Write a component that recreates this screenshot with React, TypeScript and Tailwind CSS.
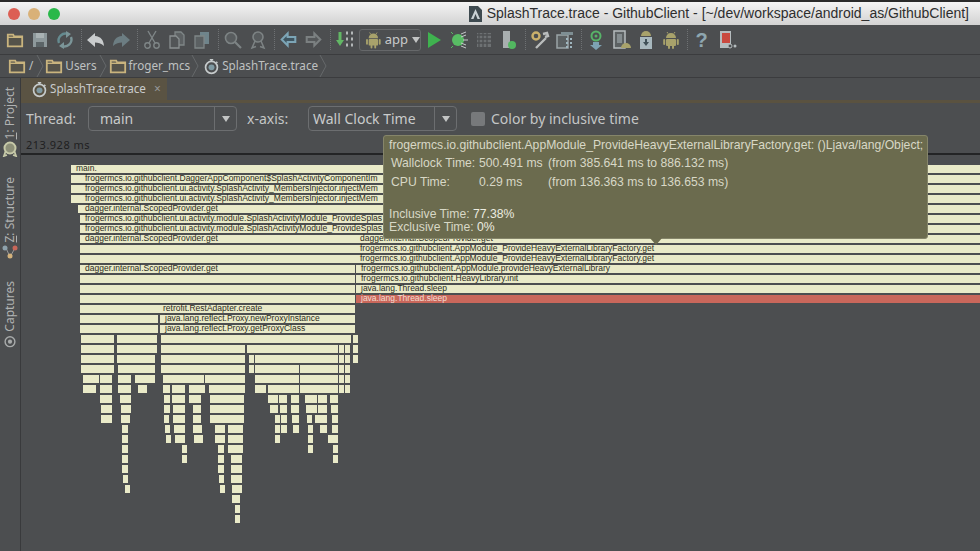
import type { ReactNode } from "react"

type Bar = { from: number; to: number; label?: string; pad?: number; red?: boolean }

const bar = (from: number, to: number, label?: string, pad = 5, red = false): Bar => ({ from, to, label, pad, red })

// lower rows were measured on a 3x crop starting at x=60
const low = (spans: number[][]): Bar[] => spans.map(([a, b]) => bar(60 + a / 3, 60 + b / 3))

const pkg = "frogermcs.io.githubclient"
const inject = `${pkg}.ui.activity.SplashActivity_MembersInjector.injectMem`
const provide = `${pkg}.ui.activity.module.SplashActivityModule_ProvideSplas`
const heavyGet = `${pkg}.AppModule_ProvideHeavyExternalLibraryFactory.get`
const scoped = "dagger.internal.ScopedProvider.get"

const rows: Bar[][] = [
  [bar(71, 980, "main.")],
  [bar(71, 77.5), bar(78, 980, `${pkg}.DaggerAppComponent$SplashActivityComponentIm`, 7)],
  [bar(71, 77.5), bar(78, 980, inject, 7)],
  [bar(71, 77.5), bar(78, 980, inject, 7)],
  [bar(78, 980, scoped, 7)],
  [bar(80, 980, provide)],
  [bar(80, 980, provide)],
  [bar(80, 355, scoped), bar(355, 980, scoped)],
  [bar(80, 355), bar(355, 980, heavyGet)],
  [bar(80, 355), bar(355, 980, heavyGet)],
  [bar(80, 354.5, scoped), bar(356, 980, `${pkg}.AppModule.provideHeavyExternalLibrary`)],
  [bar(80, 354.5), bar(356, 980, `${pkg}.HeavyLibrary.init`)],
  [bar(80, 354.5), bar(356, 980, "java.lang.Thread.sleep")],
  [bar(80, 354.5), bar(356, 980, "java.lang.Thread.sleep", 5, true)],
  [bar(80, 157.5), bar(158, 354.5, "retrofit.RestAdapter.create")],
  [bar(80, 157.5), bar(160, 354.5, "java.lang.reflect.Proxy.newProxyInstance")],
  [bar(80, 157.5), bar(160, 354.5, "java.lang.reflect.Proxy.getProxyClass")],
  low([[62, 162], [172, 292], [302, 872], [878, 884]]),
  low([[62, 162], [172, 290], [302, 556], [562, 834], [838, 852], [856, 870], [880, 884]]),
  low([[62, 162], [172, 286], [302, 554], [567, 573], [585, 834], [838, 852], [856, 870], [880, 884]]),
  low([[64, 162], [174, 286], [302, 554], [567, 573], [585, 716], [719, 834], [838, 852], [856, 870]]),
  low([[70, 117], [119, 156], [174, 213], [225, 284], [309, 432], [436, 554], [585, 717], [720, 834], [838, 852], [856, 870]]),
  low([[70, 108], [119, 156], [174, 212], [233, 261], [309, 330], [337, 374], [386, 394], [398, 434], [447, 554], [585, 618], [624, 656], [658, 716], [721, 834], [838, 852], [856, 870]]),
  low([[119, 156], [181, 212], [312, 330], [337, 374], [386, 394], [398, 424], [449, 552], [625, 654], [658, 682], [692, 716], [735, 770], [773, 802], [810, 834]]),
  low([[123, 156], [184, 212], [312, 330], [338, 356], [358, 374], [398, 424], [449, 552], [630, 654], [660, 682], [694, 716], [738, 770], [773, 802], [814, 834]]),
  low([[123, 156], [184, 210], [312, 324], [338, 356], [358, 374], [398, 424], [450, 456], [460, 552], [645, 654], [664, 682], [697, 716], [742, 756], [765, 769], [778, 802], [815, 834]]),
  low([[185, 204], [315, 324], [342, 356], [358, 374], [400, 408], [410, 424], [465, 496], [503, 548], [645, 650], [664, 682], [699, 716], [743, 752], [780, 802], [815, 834]]),
  low([[185, 204], [318, 324], [345, 354], [360, 374], [402, 408], [414, 422], [465, 496], [503, 548], [645, 650], [743, 750], [804, 808], [819, 824]]),
  low([[185, 204], [366, 372], [473, 492], [503, 548], [743, 746], [819, 824]]),
  low([[185, 204], [366, 372], [473, 492], [513, 546], [820, 824]]),
  low([[185, 204], [473, 492], [513, 546]]),
  low([[190, 204], [477, 492], [513, 546]]),
  low([[196, 202], [481, 492], [516, 519], [523, 546]]),
  low([[516, 519], [524, 531]]),
  low([[525, 531]]),
  low([[525, 531]]),
]

function Glyph({ children, size = 20 }: { children: ReactNode; size?: number }) {
  return (
    <svg width={size} height={size} viewBox="0 0 20 20" fill="none">
      {children}
    </svg>
  )
}

const Folder = () => (
  <Glyph size={18}>
    <path d="M2 4h6l1 2h9v11H2z" fill="#55534a" stroke="#c9b47e" strokeWidth="2" />
    <path d="M2 7h16" stroke="#c9b47e" strokeWidth="1.5" />
  </Glyph>
)

const Stopwatch = () => (
  <Glyph size={17}>
    <circle cx="10" cy="11" r="7" stroke="#c6cbcc" strokeWidth="2" />
    <circle cx="10" cy="11" r="3.5" fill="#7f9aa3" />
    <path d="M8 2h4M10 2v2M15.5 4.5l1.5 1.5" stroke="#c6cbcc" strokeWidth="1.6" />
  </Glyph>
)

const Android = ({ color = "#a8a26b" }: { color?: string }) => (
  <Glyph>
    <path d="M5 8a5 5 0 0 1 10 0z" fill={color} />
    <path d="M7 3.5 6 2M13 3.5 14 2" stroke={color} />
    <rect x="5" y="9" width="10" height="7" rx="1" fill={color} />
    <rect x="2.2" y="9" width="2" height="6" rx="1" fill={color} />
    <rect x="15.8" y="9" width="2" height="6" rx="1" fill={color} />
    <rect x="7" y="15" width="2" height="4" rx="1" fill={color} />
    <rect x="11" y="15" width="2" height="4" rx="1" fill={color} />
  </Glyph>
)

const tools: Record<string, ReactNode> = {
  folder: <Folder />,
  save: (
    <Glyph>
      <path d="M3 3h14v14H3z" fill="#8d989b" />
      <path d="M6 3h8v5H6z" fill="#a9b2b4" />
      <path d="M6 12h8v5H6z" fill="#5b6467" />
    </Glyph>
  ),
  sync: (
    <Glyph>
      <path d="M4 13a7 7 0 0 1 9-9" stroke="#658b90" strokeWidth="2.4" />
      <path d="M16 7a7 7 0 0 1-9 9" stroke="#7b9598" strokeWidth="2.4" />
      <path d="M11 1l5 3-5 4zM9 19l-5-3 5-4z" fill="#7b9598" />
    </Glyph>
  ),
  undo: (
    <Glyph>
      <path d="M9 3 1 10l8 7v-4.500c3 0 6 .5 9 3.500-.5-6-3-9.500-9-10z" fill="#c9cccd" />
    </Glyph>
  ),
  redo: (
    <Glyph>
      <path d="m11 3 8 7-8 7v-4.500c-3 0-6 .5-9 3.500 .5-6 3-9.500 9-10z" fill="#6c7d82" />
    </Glyph>
  ),
  cut: (
    <Glyph>
      <circle cx="5.500" cy="15.500" r="2.700" stroke="#7f8687" strokeWidth="1.400" />
      <circle cx="14.500" cy="15.500" r="2.700" stroke="#7f8687" strokeWidth="1.400" />
      <path d="M7 13 14 1M13 13 6 1" stroke="#7f8687" strokeWidth="1.400" />
    </Glyph>
  ),
  copy: (
    <Glyph>
      <path d="M8 2h6l3 3v10H8z" fill="#5d6163" stroke="#7f8687" strokeWidth="1.300" />
      <path d="M3 6h6l3 3v9H3z" fill="#525557" stroke="#8a9091" strokeWidth="1.300" />
    </Glyph>
  ),
  paste: (
    <Glyph>
      <path d="M8 2h9v12H8z" fill="#6f848b" />
      <path d="M3 6h9v12H3z" fill="#5b6062" stroke="#7f8687" strokeWidth="1.300" />
    </Glyph>
  ),
  find: (
    <Glyph>
      <circle cx="8" cy="8" r="5.500" stroke="#7d8384" strokeWidth="1.600" fill="#585c5e" />
      <path d="m12 12 6 6" stroke="#7d8384" strokeWidth="2.200" />
    </Glyph>
  ),
  replace: (
    <Glyph>
      <circle cx="10" cy="7" r="5" stroke="#7d8384" strokeWidth="1.600" fill="#585c5e" />
      <path d="m7 11-3 7 4-1.500M13 11l3 7-4-1.500" stroke="#7d8384" strokeWidth="1.500" />
    </Glyph>
  ),
  back: (
    <Glyph size={17}>
      <path d="M9 3 2 10l7 7v-4h9V7H9z" fill="#3f5560" stroke="#7ca5b6" strokeWidth="2.400" />
    </Glyph>
  ),
  forward: (
    <Glyph size={17}>
      <path d="m11 3 7 7-7 7v-4H2V7h9z" fill="#55585a" stroke="#7b8081" strokeWidth="2.400" />
    </Glyph>
  ),
  binary: (
    <Glyph>
      <path d="M5 2v9" stroke="#62b765" strokeWidth="3" />
      <path d="M1 10h8l-4 6z" fill="#62b765" />
      <path d="M11 3h2M16 3h2M11 9h2M16 9h2M11 15h2M16 15h2" stroke="#b3b7b8" strokeWidth="3" />
    </Glyph>
  ),
  run: (
    <Glyph>
      <path d="M4 2v16l13-8z" fill="#3fb24f" />
    </Glyph>
  ),
  debug: (
    <Glyph>
      <circle cx="9" cy="10" r="6" fill="#58bd64" />
      <path d="M12 4 17 2M12 16l5 2M14 10h5M12 7l5-2M12 13l5 2" stroke="#c4c8c9" />
      <path d="M4 4 2 2M4 16l-2 2" stroke="#58bd64" />
    </Glyph>
  ),
  coverage: (
    <Glyph>
      <path d="M3 3h14v14H3z" fill="#6d7173" />
      <path d="M3 5h14M3 9h14M3 13h14M5 3v14M9 3v14M13 3v14" stroke="#4d4f51" strokeWidth="1.300" />
    </Glyph>
  ),
  attach: (
    <Glyph>
      <path d="M4 1h7v17H4z" fill="#a8aeaf" />
      <circle cx="13" cy="15" r="4" fill="#52b760" />
    </Glyph>
  ),
  settings: (
    <Glyph>
      <circle cx="6" cy="6" r="3.500" stroke="#cbb06b" strokeWidth="2.400" />
      <path d="M6 18 16 8M13 4l4-1 1 3-3 1" stroke="#b9bcbc" strokeWidth="2.400" />
    </Glyph>
  ),
  structure: (
    <Glyph>
      <path d="M2 5h11v13H2z" fill="#5b6062" stroke="#9aa4a7" strokeWidth="1.500" />
      <path d="M6 2h12v3H6z" fill="#7e8e93" />
      <path d="M11 8h2v2h-2zM15 8h2v2h-2zM11 12h2v2h-2zM15 12h2v2h-2zM11 16h2v2h-2zM15 16h2v2h-2z" fill="#9fb6bf" />
    </Glyph>
  ),
  gradle: (
    <Glyph>
      <circle cx="10" cy="6" r="4.500" stroke="#57b368" strokeWidth="2" />
      <circle cx="10" cy="6" r="1.500" fill="#57b368" />
      <path d="M7 12h6v3h3l-6 5-6-5h3z" fill="#7da2b2" />
    </Glyph>
  ),
  avd: (
    <Glyph>
      <path d="M3 1h11v17H3z" fill="#5c6163" stroke="#b5bcbe" strokeWidth="1.500" />
      <path d="M6 4h5v9H6z" fill="#858d90" />
      <path d="M10 18a5 5 0 0 1 10 0z" fill="#a8a26b" />
    </Glyph>
  ),
  sdk: (
    <Glyph>
      <path d="M5 6a5 5 0 0 1 10 0z" fill="#a8a26b" />
      <path d="M4 7h12v12H4z" fill="#a8b8be" />
      <path d="M9 9h2v3h2l-3 4-3-4h2z" fill="#3f5057" />
    </Glyph>
  ),
  android: <Android />,
  help: (
    <span className="font-['Liberation_Sans',sans-serif] text-[20px] leading-none font-bold text-[#8ea6b0]">?</span>
  ),
  monitor: (
    <Glyph>
      <path d="M3 1h11v17H3z" fill="#b5bcbe" />
      <path d="M5 3h8v10H5z" fill="#c9493f" />
      <circle cx="13" cy="16" r="2" fill="#4c4e50" stroke="#b5bcbe" />
      <circle cx="18" cy="16" r="1.500" fill="#b5bcbe" />
    </Glyph>
  ),
}

function Tool({ name }: { name: string }) {
  return <div className="flex h-full w-[25px] items-center justify-center">{tools[name]}</div>
}

function Sep() {
  return (
    <div className="flex h-full w-[6px] justify-end py-1 pr-[1px]">
      <div className="h-full border-r border-dotted border-[#6e7173]" />
    </div>
  )
}

function Crumb({ className }: { className: string }) {
  return (
    <svg width="9" height="22" viewBox="0 0 9 22" fill="none" className={`shrink-0 ${className}`}>
      <path d="M1 0l6 11-6 11" stroke="#66696b" />
    </svg>
  )
}

function SideLabel({ children, className }: { children: ReactNode; className: string }) {
  return (
    <div className={`rotate-180 whitespace-nowrap text-[12px] leading-[20px] text-[#b0b2b2] [writing-mode:vertical-rl] ${className}`}>
      {children}
    </div>
  )
}

function Select({ label, className, pad }: { label: string; className: string; pad: string }) {
  return (
    <div className={`flex h-[25px] items-center rounded-[4px] border border-[#6c6e70] ${className}`}>
      <div className={`flex-1 text-[14px] text-[#c9cbcb] ${pad}`}>{label}</div>
      <div className="flex h-full w-[22px] items-center justify-center border-l border-[#6c6e70]">
        <div className="h-0 w-0 border-x-[4px] border-t-[6px] border-x-transparent border-t-[#c2c4c4]" />
      </div>
    </div>
  )
}

function FlameRow({ bars }: { bars: Bar[] }) {
  return (
    <div className="relative h-[10px]">
      {bars.map((b, i) => (
        <div
          key={i}
          className={`absolute top-0 h-[7.5px] whitespace-nowrap font-['Liberation_Sans',sans-serif] text-[8.5px] leading-[7.5px] ${
            b.red ? "bg-[#c9675b] text-[#f3ddd2]" : "bg-[#e9eac8] text-[#2c2c22]"
          }`}
          style={{ left: b.from - 21, width: b.to - b.from, paddingLeft: b.pad }}
        >
          {b.label}
        </div>
      ))}
    </div>
  )
}

export default function App() {
  return (
    <div className="flex h-[551px] w-[980px] flex-col overflow-hidden bg-[#4c4e50] font-['Noto_Sans',sans-serif] text-[#c4c6c6]">
      {/* title bar */}
      <div className="flex h-[25px] shrink-0 items-center border-t-2 border-[#2a2a2a] bg-gradient-to-b from-[#f4f4f4] to-[#d2d2d2] pl-2 pr-[11px]">
        <div className="flex gap-2">
          <div className="h-3 w-3 rounded-full bg-[#dc5f54]" />
          <div className="h-3 w-3 rounded-full bg-[#d9b178]" />
          <div className="h-3 w-3 rounded-full bg-[#2ab84a]" />
        </div>
        <div className="ml-auto flex items-center gap-[5px]">
          <svg width="13" height="16" viewBox="0 0 13 16">
            <path d="M0 0h9l4 4v12H0z" fill="#3e4a50" />
            <path d="M6.500 3 11 13H8.500l-2-5-2 5H2z" fill="#c9d2d6" />
          </svg>
          <span className="font-['Liberation_Sans',sans-serif] text-[14px] text-[#2e2e2e]">
            SplashTrace.trace - GithubClient - [~/dev/workspace/android_as/GithubClient]
          </span>
        </div>
      </div>

      {/* main toolbar */}
      <div className="flex h-[30px] shrink-0 items-center border-b border-[#3b3c3e] pl-[2px]">
        <Tool name="folder" />
        <Tool name="save" />
        <Tool name="sync" />
        <Sep />
        <Tool name="undo" />
        <Tool name="redo" />
        <Sep />
        <Tool name="cut" />
        <Tool name="copy" />
        <Tool name="paste" />
        <Sep />
        <Tool name="find" />
        <Tool name="replace" />
        <Sep />
        <Tool name="back" />
        <Tool name="forward" />
        <Sep />
        <Tool name="binary" />
        <div className="ml-[2px] flex h-[22px] w-[62px] items-center gap-[2px] rounded-[3px] border border-[#66686a] pl-[4px]">
          <Android />
          <span className="text-[13px] text-[#c9cbcb]">app</span>
          <div className="ml-[2px] h-0 w-0 border-x-[4px] border-t-[6px] border-x-transparent border-t-[#c2c4c4]" />
        </div>
        <Tool name="run" />
        <Tool name="debug" />
        <Tool name="coverage" />
        <Tool name="attach" />
        <Sep />
        <Tool name="settings" />
        <Tool name="structure" />
        <Sep />
        <Tool name="gradle" />
        <Tool name="avd" />
        <Tool name="sdk" />
        <Tool name="android" />
        <Sep />
        <Tool name="help" />
        <Tool name="monitor" />
      </div>

      {/* breadcrumb */}
      <div className="flex h-[23px] shrink-0 items-center border-b border-[#3b3c3e] pl-2 text-[11.7px] text-[#bfc1c1]">
        <Folder />
        <span className="ml-[3px]">/</span>
        <Crumb className="ml-[3px]" />
        <Folder />
        <span className="ml-[2px]">Users</span>
        <Crumb className="mr-[1px] ml-[2px]" />
        <Folder />
        <span className="ml-[2px]">froger_mcs</span>
        <Crumb className="mr-[3px] ml-[1px]" />
        <Stopwatch />
        <span className="ml-[2px]">SplashTrace.trace</span>
        <Crumb className="ml-[1px]" />
      </div>

      <div className="flex min-h-0 flex-1">
        {/* tool window strip */}
        <div className="flex w-[21px] shrink-0 flex-col items-center border-r border-[#393a3c] pt-[9px]">
          <SideLabel className="">
            <span className="underline">1</span>: Project
          </SideLabel>
          <svg width="16" height="16" viewBox="0 0 16 16" className="mt-[2px]">
            <path d="M4 9 2 15l3-1M12 9l2 6-3-1" stroke="#c6c9a8" strokeWidth="1.800" fill="none" />
            <circle cx="8" cy="7" r="5.500" fill="#8c8f78" stroke="#c6c9a8" strokeWidth="2" />
          </svg>
          <SideLabel className="mt-[20px]">
            <span className="underline">Z</span>: Structure
          </SideLabel>
          <svg width="16" height="16" viewBox="0 0 16 16">
            <path d="M4 5l4 9 5-9" stroke="#999" fill="none" />
            <circle cx="3" cy="5" r="2.500" fill="#8ea1ab" />
            <circle cx="13" cy="5" r="2.500" fill="#c8675a" />
            <circle cx="8" cy="13" r="2.500" fill="#d3b27c" />
          </svg>
          <SideLabel className="mt-[22px]">Captures</SideLabel>
          <svg width="14" height="14" viewBox="0 0 20 20" className="mt-[2px]">
            <circle cx="10" cy="11" r="7" stroke="#a8abab" strokeWidth="2" fill="none" />
            <circle cx="10" cy="11" r="3" fill="#a8abab" />
          </svg>
        </div>

        <div className="relative flex min-w-0 flex-1 flex-col">
          {/* editor tabs */}
          <div className="flex h-[25px] shrink-0 border-b-[3px] border-[#5a5240]">
            <div className="flex w-[146px] items-center bg-[#5a5343] pl-[10px] text-[11.7px] text-[#c9cbcb]">
              <Stopwatch />
              <span className="ml-[2px]">SplashTrace.trace</span>
              <span className="ml-[8px] text-[12px] text-[#96989a]">×</span>
            </div>
          </div>

          {/* trace options */}
          <div className="flex h-[31px] shrink-0 items-center pl-[5px] text-[14px]">
            <span className="w-[62px]">Thread:</span>
            <Select label="main" className="w-[149px]" pad="pl-[11px]" />
            <span className="ml-[10px] w-[61px]">x-axis:</span>
            <Select label="Wall Clock Time" className="w-[149px]" pad="pl-[4px]" />
            <div className="ml-[14px] h-[14px] w-[14px] rounded-[2px] bg-[#77797b]" />
            <span className="ml-[6px]">Color by inclusive time</span>
          </div>

          {/* time ruler */}
          <div className="flex h-[21px] shrink-0 items-center border-b-2 border-[#232425] pt-[4px] pl-[5px] text-[11px] tracking-[0.5px] text-[#1f2021]">
            213.928 ms
          </div>

          {/* flame chart */}
          <div className="relative min-h-0 flex-1 pt-[10px]">
            {rows.map((bars, i) => (
              <FlameRow key={i} bars={bars} />
            ))}
          </div>

          {/* hover tooltip */}
          <div className="absolute top-[57px] left-[362px] h-[104px] w-[545px] rounded-[3px] border border-[#85856a] bg-[#6b6b4e] pl-[5px] font-['Liberation_Sans',sans-serif] text-[12.2px] leading-[18px] text-[#d8d8c6]">
            <div className="pt-[1px] leading-[17px]">
              frogermcs.io.githubclient.AppModule_ProvideHeavyExternalLibraryFactory.get: ()Ljava/lang/Object;
            </div>
            <div className="grid grid-cols-[88px_69px_1fr] pl-[2px] whitespace-nowrap">
              <span>Wallclock Time:</span>
              <span>500.491 ms</span>
              <span>(from 385.641 ms to 886.132 ms)</span>
            </div>
            <div className="mt-[1px] grid grid-cols-[88px_69px_1fr] pl-[2px] whitespace-nowrap">
              <span>CPU Time:</span>
              <span>0.29 ms</span>
              <span>(from 136.363 ms to 136.653 ms)</span>
            </div>
            <div className="mt-[16px] leading-[14px]">
              Inclusive Time: <span className="text-[#ecece0]">77.38%</span>
            </div>
            <div className="-mt-[1px] leading-[14px]">
              Exclusive Time: <span className="text-[#ecece0]">0%</span>
            </div>
            <div className="absolute -bottom-[7px] left-[266px] h-0 w-0 border-x-[6px] border-t-[7px] border-x-transparent border-t-[#6b6b4e]" />
          </div>
        </div>
      </div>
    </div>
  )
}
